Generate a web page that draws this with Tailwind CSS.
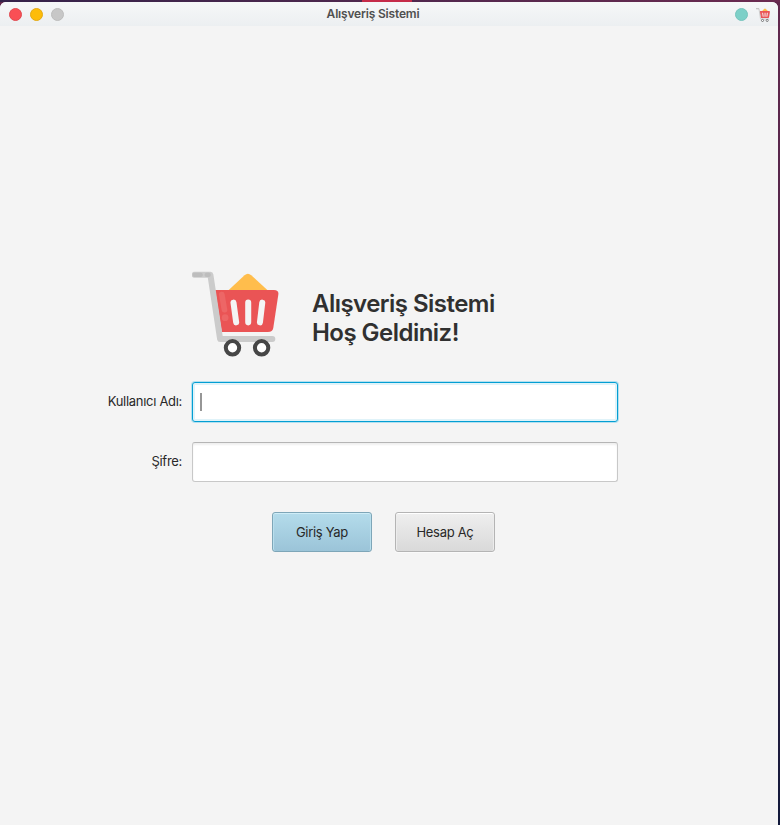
<!DOCTYPE html>
<html lang="tr">
<head>
<meta charset="utf-8">
<title>Alışveriş Sistemi</title>
<script src="https://cdn.jsdelivr.net/npm/@tailwindcss/browser@4"></script>
</head>
<body class="w-[780px] h-[825px] overflow-hidden bg-linear-to-b from-[#62284d] via-[#4a2348] to-[#10183a] pr-[2px] font-['Inter','Liberation_Sans',sans-serif] text-[#282828]">
<svg class="hidden">
  <symbol id="cart" viewBox="36 34 260 256">
    <path d="M145 91 L193 46 Q203 37 213 46 L262 91Z" fill="#ffbd4c"/>
    <path d="M105 90 H281 Q296 90 294 104 L279 203 Q277 216 263 216 H125Z" fill="#ea5455"/>
    <path d="M125 104 L133 149" stroke="#ed6666" stroke-width="17" stroke-linecap="round"/>
    <circle cx="135" cy="173" r="10" fill="#ed6666"/>
    <path d="M160 128 L168 187 M204 128 V187 M246 128 L239 187" stroke="#f4f4f4" stroke-width="18" stroke-linecap="round"/>
    <path d="M44 45 H91 L120 237 H276" fill="none" stroke="#cbcbcb" stroke-width="18" stroke-linecap="round" stroke-linejoin="round"/>
    <path d="M44 45 H62 M80 45 H86" stroke="#bdbdbd" stroke-width="13" stroke-linecap="round"/>
    <circle cx="157" cy="263" r="20" fill="#fff" stroke="#464646" stroke-width="12"/>
    <circle cx="244" cy="263" r="20" fill="#fff" stroke="#464646" stroke-width="12"/>
  </symbol>
</svg>
<div class="h-[2px] w-[780px] bg-linear-to-r from-[#35224a] to-[#6b2a50] flex"><div class="ml-[362px] w-[50px] bg-[#c52b49]"></div></div>
<div class="h-[823px] rounded-t-[6px] overflow-hidden bg-[#f4f4f4] flex flex-col">
  <header class="h-6 shrink-0 bg-linear-to-b from-[#f6f7f8] to-[#eceff1] grid grid-cols-3 items-center">
    <div class="flex gap-2 pl-[9px] pt-[1px]">
      <span class="size-[13px] rounded-full bg-[#f94f55] border border-[#df4a50]"></span>
      <span class="size-[13px] rounded-full bg-[#fdbc09] border border-[#e3a914]"></span>
      <span class="size-[13px] rounded-full bg-[#c7c7c7] border border-[#bcbcbc]"></span>
    </div>
    <h1 class="justify-self-center relative left-[-16px] text-[12px] font-semibold tracking-[-0.18px] text-[#505050] whitespace-nowrap">Alışveriş Sistemi</h1>
    <div class="flex justify-end items-center gap-2 pr-[8px] pt-[1px]">
      <span class="size-[13px] rounded-full bg-[#7dd0c8] border border-[#76c4bd]"></span>
      <svg class="w-[14px] h-[14px]"><use href="#cart"/></svg>
    </div>
  </header>
  <main class="pt-[245px] w-[618px]">
    <div class="flex pl-[192px] h-[86px]">
      <svg class="w-[87px] h-[86px] shrink-0"><use href="#cart"/></svg>
      <h2 class="ml-[33px] mt-[18px] text-[24px] leading-[29px] font-semibold tracking-[-0.53px] text-[#303030] whitespace-nowrap">Alışveriş Sistemi<br>Hoş Geldiniz!</h2>
    </div>
    <form class="mt-[25px] grid grid-cols-[182px_426px] gap-x-[10px] gap-y-5 items-center text-[13px] tracking-[-0.3px]">
      <label class="text-right whitespace-nowrap">Kullanıcı Adı:</label>
      <div class="h-10 rounded-[3px] bg-white border border-[#039ed3] ring-1 ring-[#b4e0ef] shadow-[inset_0_0_0_2px_#e0f3f9] flex items-center pl-[7px]"><span class="w-[2px] h-[18px] bg-[#969696]"></span></div>
      <label class="text-right whitespace-nowrap">Şifre:</label>
      <div class="h-10 rounded-[3px] bg-white border border-[#c8c8c8] border-t-[#b5b5b5] shadow-[inset_0_2px_2px_#f0f0f0]"></div>
    </form>
    <div class="mt-[30px] ml-[272px] flex gap-[23px] text-[13px] tracking-[-0.3px]">
      <button type="button" class="w-[100px] h-10 pt-[2px] rounded-[3px] border border-[#7ea6b8] bg-linear-to-b from-[#b4dceb] to-[#9bc4d8] shadow-[inset_0_1px_#cfedf7,inset_1px_0_#b9dfed,inset_-1px_0_#b9dfed]">Giriş Yap</button>
      <button type="button" class="w-[100px] h-10 pt-[2px] rounded-[3px] border border-[#b4b4b4] bg-linear-to-b from-[#efefef] to-[#d9d9d9] shadow-[inset_0_1px_#fff,inset_1px_0_#ececec,inset_-1px_0_#ececec,0_1px_#fafafa]">Hesap Aç</button>
    </div>
  </main>
</div>
</body>
</html>
